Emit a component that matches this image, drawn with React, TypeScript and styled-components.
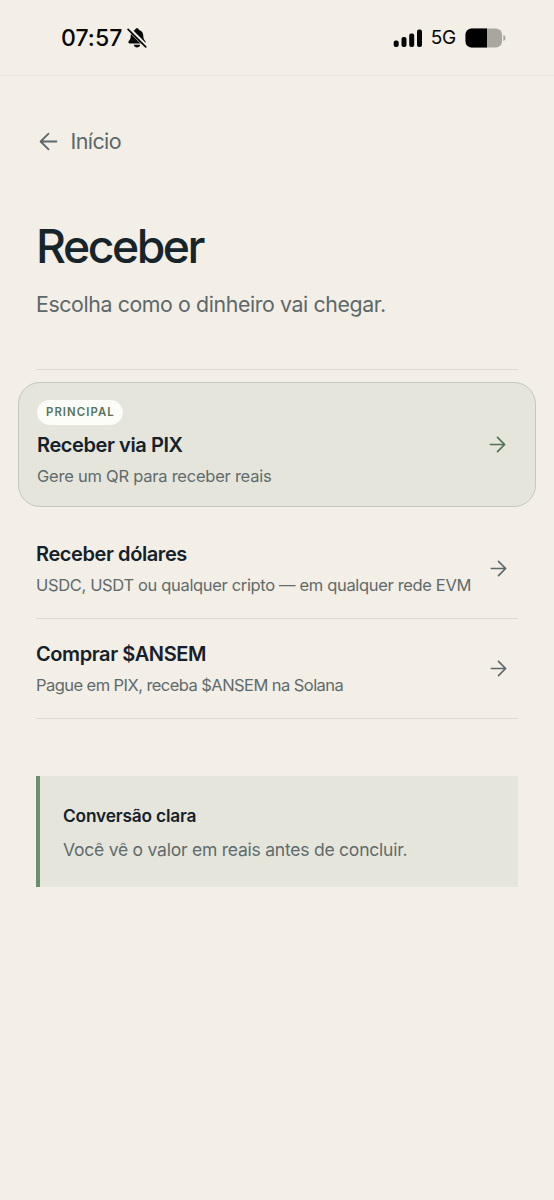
import React from "react";
import styled, { createGlobalStyle } from "styled-components";

const GlobalStyle = createGlobalStyle`
  *, *::before, *::after { box-sizing: border-box; }
  body {
    margin: 0;
    background: #f3eee6;
    color: #14212a;
    font-family: Inter, "Liberation Sans", sans-serif;
    -webkit-font-smoothing: antialiased;
  }
`;

const Screen = styled.div`
  width: 554px;
  min-height: 1200px;
  background: #f3eee6;
`;

const StatusBar = styled.header`
  display: flex;
  justify-content: space-between;
  height: 76px;
  padding: 24px 48px 0 61px;
  border-bottom: 1px solid #e8e4dd;
  color: #050505;
`;

const StatusGroup = styled.div<{ $gap: number }>`
  display: flex;
  align-items: center;
  gap: ${(p) => p.$gap}px;
  height: 28px;
`;

const Clock = styled.span`
  font-size: 23px;
  font-weight: 550;
  line-height: 28px;
  letter-spacing: 0.05px;
`;

const Network = styled.span`
  font-size: 19px;
  font-weight: 400;
  line-height: 28px;
  letter-spacing: -0.2px;
`;

const Content = styled.main`
  display: flex;
  flex-direction: column;
  padding: 49px 36px 0;
`;

const BackLink = styled.a`
  display: flex;
  align-items: center;
  gap: 11.5px;
  height: 32px;
  padding-left: 2px;
  color: #5c6869;
`;

const BackLabel = styled.span`
  font-size: 21.5px;
  line-height: 32px;
  letter-spacing: -0.6px;
`;

const Title = styled.h1`
  margin: 61px 0 0;
  font-size: 46.3px;
  font-weight: 500;
  line-height: 56px;
  letter-spacing: -2.45px;
  color: #16252b;
  white-space: nowrap;
`;

const Subtitle = styled.p`
  margin: 14px 0 0;
  font-size: 21.3px;
  line-height: 32px;
  letter-spacing: -0.38px;
  color: #5c6869;
  white-space: nowrap;
`;

const Options = styled.div`
  display: flex;
  flex-direction: column;
  margin-top: 49px;
  padding-top: 12px;
  border-top: 1px solid #dcd9d2;
`;

const Row = styled.a<{ $featured?: boolean }>`
  display: flex;
  align-items: center;
  justify-content: space-between;
  height: ${(p) => (p.$featured ? 125 : 100)}px;
  margin: ${(p) => (p.$featured ? "0 -18px 12px" : "0")};
  padding: ${(p) => (p.$featured ? "0 28px 0 18px" : "0 10px 0 0")};
  border: 1px solid ${(p) => (p.$featured ? "#c2c8be" : "transparent")};
  border-width: ${(p) => (p.$featured ? "1px" : "0 0 1px")};
  ${(p) => !p.$featured && "border-bottom-color: #dcd9d2;"}
  border-radius: ${(p) => (p.$featured ? 22 : 0)}px;
  background: ${(p) => (p.$featured ? "#e5e5dc" : "transparent")};
  color: ${(p) => (p.$featured ? "#4e7054" : "#5c6869")};
`;

const RowText = styled.div`
  display: flex;
  flex-direction: column;
  align-items: flex-start;
  white-space: nowrap;
`;

const Badge = styled.span`
  height: 25px;
  margin-bottom: 5px;
  padding: 0 8px 0 9px;
  border-radius: 13px;
  background: #fcfcf8;
  color: #55735b;
  font-size: 11.3px;
  font-weight: 600;
  line-height: 25px;
  letter-spacing: 1.1px;
`;

const RowTitle = styled.span`
  font-size: 20px;
  font-weight: 600;
  line-height: 30px;
  letter-spacing: -0.41px;
  color: #14212a;
`;

const RowDetail = styled.span<{ $spacing: number }>`
  margin-top: 3px;
  font-size: 16.5px;
  line-height: 26px;
  letter-spacing: ${(p) => p.$spacing}px;
  color: #5f6b6b;
`;

const Note = styled.aside`
  height: 111px;
  margin-top: 57px;
  padding: 26px 23px 0;
  border-left: 4px solid #6a8e70;
  background: #e5e5dc;
  white-space: nowrap;
`;

const NoteTitle = styled.div`
  font-size: 17.3px;
  font-weight: 600;
  line-height: 28px;
  letter-spacing: -0.17px;
`;

const NoteText = styled.div`
  margin-top: 6px;
  font-size: 17.5px;
  line-height: 28px;
  letter-spacing: -0.23px;
  color: #5f6b6b;
`;

const Arrow = ({ back = false, size }: { back?: boolean; size: number }) => (
  <svg width={size} height={size} viewBox="0 0 24 24" fill="none" stroke="currentColor" strokeWidth="2.1" strokeLinecap="round" strokeLinejoin="round">
    {back ? <path d="M21 12H3.5M12 3 3 12l9 9" /> : <path d="M3 12h17.5M12 3l9 9-9 9" />}
  </svg>
);

const MutedBell = () => (
  <svg width="20" height="20" viewBox="0 0 20 20">
    <path d="M2.800 15.400C1.400 15.400.9 14 1.800 13c1.300-1.400 1.900-2.600 1.900-5C3.700 4.700 5.400 2.500 8 1.900c.2-1.100 1-1.700 2-1.700s1.800.6 2 1.700c2.600.6 4.300 2.800 4.300 6.100 0 2.400.6 3.600 1.900 5 .9 1 .4 2.400-1 2.400Z" fill="#080808" />
    <path d="M6.800 16.700h6.400c-.3 1.700-1.600 2.700-3.200 2.700s-2.900-1-3.200-2.700Z" fill="#080808" />
    <path d="M1.200.3 19.700 18.800" stroke="#f3eee6" strokeWidth="4.200" />
    <path d="M1.100 1.300 18.700 18.900" stroke="#080808" strokeWidth="1.700" strokeLinecap="round" />
  </svg>
);

const Signal = () => (
  <svg width="29" height="19" viewBox="0 0 29 19" fill="#050505">
    <rect x="0.700" y="11.500" width="5" height="6.500" rx="2" />
    <rect x="8.500" y="8" width="5" height="10" rx="2" />
    <rect x="16.200" y="4.500" width="5" height="13.500" rx="2" />
    <rect x="24" y="0.500" width="5" height="17.500" rx="2" />
  </svg>
);

const Battery = () => (
  <svg width="41" height="20" viewBox="0 0 41 20">
    <rect x="0.500" y="0.500" width="36.500" height="19" rx="6" fill="#a9a69f" />
    <path d="M22 .5H6.500a6 6 0 0 0-6 6v7a6 6 0 0 0 6 6H22Z" fill="#000" />
    <path d="M38.300 7c1.500.4 2.200 1.500 2.200 3s-.7 2.600-2.200 3Z" fill="#a9a69f" />
  </svg>
);

const options = [
  { title: "Receber via PIX", detail: "Gere um QR para receber reais", badge: "PRINCIPAL", detailSpacing: -0.24 },
  { title: "Receber dólares", detail: "USDC, USDT ou qualquer cripto — em qualquer rede EVM", detailSpacing: -0.34 },
  { title: "Comprar $ANSEM", detail: "Pague em PIX, receba $ANSEM na Solana", detailSpacing: -0.56 },
];

export default function App() {
  return (
    <Screen>
      <GlobalStyle />
      <StatusBar>
        <StatusGroup $gap={5}>
          <Clock>07:57</Clock>
          <MutedBell />
        </StatusGroup>
        <StatusGroup $gap={9}>
          <Signal />
          <Network>5G</Network>
          <Battery />
        </StatusGroup>
      </StatusBar>
      <Content>
        <BackLink>
          <Arrow back size={21} />
          <BackLabel>Início</BackLabel>
        </BackLink>
        <Title>Receber</Title>
        <Subtitle>Escolha como o dinheiro vai chegar.</Subtitle>
        <Options>
          {options.map((o) => (
            <Row key={o.title} $featured={!!o.badge}>
              <RowText>
                {o.badge && <Badge>{o.badge}</Badge>}
                <RowTitle>{o.title}</RowTitle>
                <RowDetail $spacing={o.detailSpacing}>{o.detail}</RowDetail>
              </RowText>
              <Arrow size={19} />
            </Row>
          ))}
        </Options>
        <Note>
          <NoteTitle>Conversão clara</NoteTitle>
          <NoteText>Você vê o valor em reais antes de concluir.</NoteText>
        </Note>
      </Content>
    </Screen>
  );
}
